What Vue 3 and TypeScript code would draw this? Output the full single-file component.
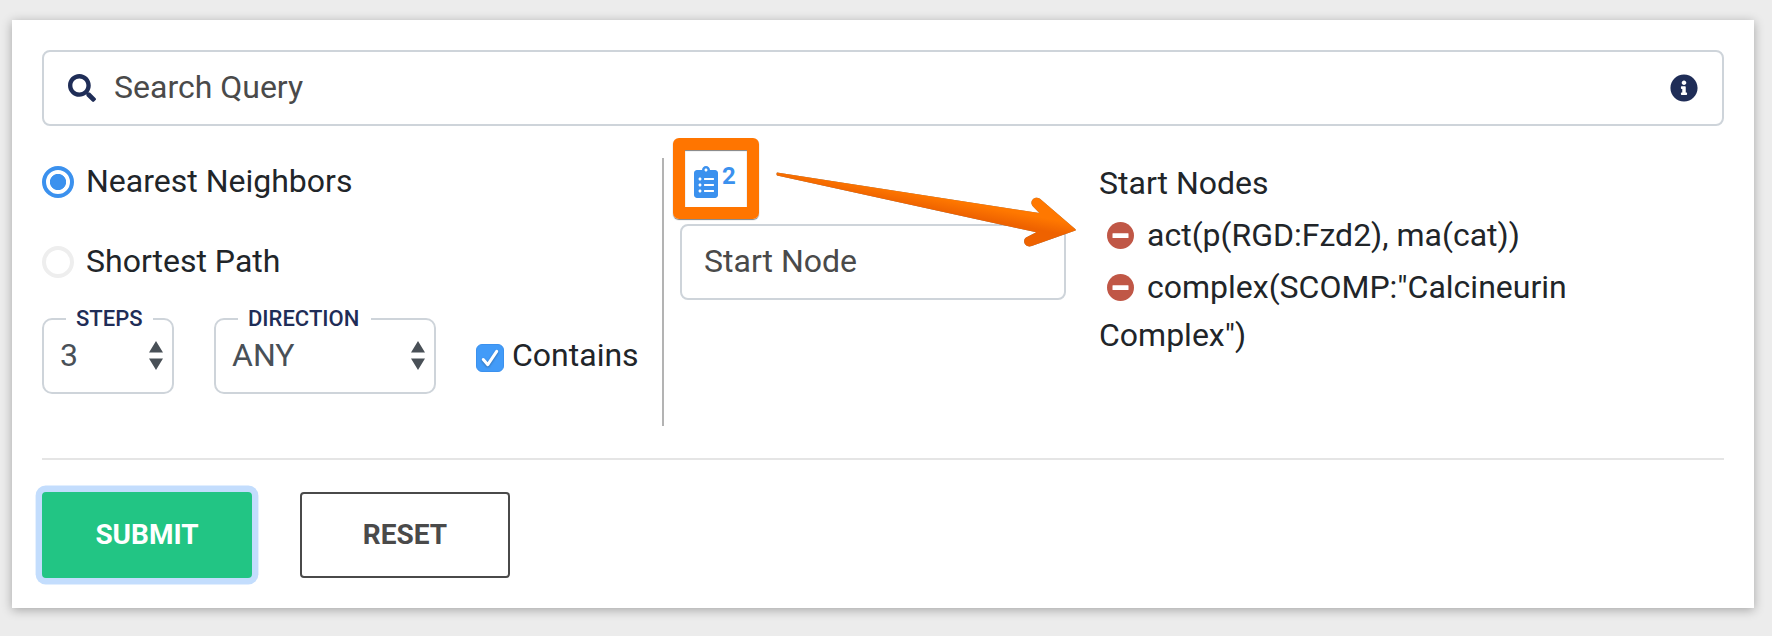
<script setup lang="ts">
import { ref } from 'vue'

type Mode = 'nearest' | 'shortest'

const modes: { id: Mode; label: string }[] = [
  { id: 'nearest', label: 'Nearest Neighbors' },
  { id: 'shortest', label: 'Shortest Path' },
]
const mode = ref<Mode>('nearest')

const selects = [
  { id: 'steps', label: 'Steps', value: '3' },
  { id: 'direction', label: 'Direction', value: 'ANY' },
]
const contains = ref(true)

const startNodes = ref<string[]>(['act(p(RGD:Fzd2), ma(cat))', 'complex(SCOMP:"Calcineurin Complex")'])

function removeNode(index: number) {
  startNodes.value.splice(index, 1)
}
</script>

<template>
  <div class="page">
    <main class="card">
      <div class="search">
        <svg class="search-icon" viewBox="0 0 512 512">
          <path d="M505 442.700L405.300 343c-4.500-4.500-10.600-7-17-7H372c27.600-35.300 44-79.700 44-128C416 93.100 322.900 0 208 0S0 93.100 0 208s93.100 208 208 208c48.300 0 92.700-16.400 128-44v16.300c0 6.400 2.500 12.500 7 17l99.700 99.700c9.400 9.400 24.600 9.400 33.900 0l28.300-28.300c9.400-9.400 9.400-24.600.1-34zM208 336c-70.700 0-128-57.200-128-128 0-70.700 57.200-128 128-128 70.700 0 128 57.200 128 128 0 70.700-57.200 128-128 128z" />
        </svg>
        <span class="placeholder">Search Query</span>
        <svg class="info-icon" viewBox="0 0 512 512">
          <path d="M256 8C119 8 8 119.100 8 256c0 137 111 248 248 248s248-111 248-248C504 119.100 393 8 256 8zm0 110c23.200 0 42 18.800 42 42s-18.800 42-42 42-42-18.800-42-42 18.800-42 42-42zm56 254c0 6.600-5.400 12-12 12h-88c-6.600 0-12-5.400-12-12v-24c0-6.600 5.400-12 12-12h12v-64h-12c-6.600 0-12-5.400-12-12v-24c0-6.600 5.400-12 12-12h64c6.600 0 12 5.400 12 12v100h12c6.600 0 12 5.400 12 12v24z" />
        </svg>
      </div>

      <div class="columns">
        <section class="options">
          <div
            v-for="m in modes"
            :key="m.id"
            class="radio"
            :class="{ checked: mode === m.id }"
            @click="mode = m.id"
          >
            <span class="dot"></span>
            <span>{{ m.label }}</span>
          </div>
          <div class="controls">
            <div v-for="s in selects" :key="s.id" class="select" :class="s.id">
              <span class="legend">{{ s.label }}</span>
              <span class="value">{{ s.value }}</span>
              <svg class="arrows" viewBox="0 0 14 29">
                <path d="M7 0L14 11.500H0zM7 29L0 17.500h14z" />
              </svg>
            </div>
            <div class="check" @click="contains = !contains">
              <span class="box">
                <svg v-if="contains" viewBox="0 0 28 28">
                  <path d="M7.300 15.500L11.800 20.700L20.700 7.300" />
                </svg>
              </span>
              <span>Contains</span>
            </div>
          </div>
        </section>

        <section class="start">
          <div class="highlight">
            <svg class="clipboard" viewBox="0 0 384 512">
              <path d="M336 64h-80c0-35.300-28.700-64-64-64s-64 28.700-64 64H48C21.500 64 0 85.500 0 112v352c0 26.500 21.500 48 48 48h288c26.500 0 48-21.500 48-48V112c0-26.500-21.500-48-48-48zM96 424c-13.300 0-24-10.700-24-24s10.700-24 24-24 24 10.700 24 24-10.700 24-24 24zm0-96c-13.300 0-24-10.700-24-24s10.700-24 24-24 24 10.700 24 24-10.700 24-24 24zm0-96c-13.300 0-24-10.700-24-24s10.700-24 24-24 24 10.700 24 24-10.700 24-24 24zm96-192c13.300 0 24 10.700 24 24s-10.700 24-24 24-24-10.700-24-24 10.700-24 24-24zm128 368c0 4.400-3.600 8-8 8H168c-4.400 0-8-3.600-8-8v-16c0-4.400 3.600-8 8-8h144c4.400 0 8 3.600 8 8v16zm0-96c0 4.400-3.600 8-8 8H168c-4.400 0-8-3.600-8-8v-16c0-4.400 3.600-8 8-8h144c4.400 0 8 3.600 8 8v16zm0-96c0 4.400-3.600 8-8 8H168c-4.400 0-8-3.600-8-8v-16c0-4.400 3.600-8 8-8h144c4.400 0 8 3.600 8 8v16z" />
            </svg>
            <span class="count">{{ startNodes.length }}</span>
          </div>
          <div class="node-input">Start Node</div>
          <svg class="pointer" viewBox="0 0 304 54">
            <defs>
              <linearGradient id="pointer-fill" gradientUnits="userSpaceOnUse" x1="262" y1="42" x2="258" y2="63">
                <stop offset="0.200" stop-color="#ff7800" />
                <stop offset="0.800" stop-color="#ee6200" />
              </linearGradient>
            </defs>
            <path fill="url(#pointer-fill)" d="M3 2.400L265.300 43L259 36.600C254.500 31.500 260.500 25.500 266 28.800L301.500 59.300Q302 60 301.500 60.500L257 76.300C250.500 77.700 247.500 69.500 253 67L262.300 62.300L3 5.600Q2 4 3 2.400z" />
          </svg>
        </section>

        <section class="nodes">
          <div>Start Nodes</div>
          <div v-for="(node, i) in startNodes" :key="node" class="node">
            <svg class="minus" viewBox="0 0 27 27" @click="removeNode(i)">
              <circle cx="13.500" cy="13.500" r="13.500" />
              <rect x="5.500" y="11.300" width="16" height="4.600" rx="0.500" />
            </svg>{{ node }}
          </div>
        </section>
      </div>

      <div class="actions">
        <button class="btn submit" type="button">Submit</button>
        <button class="btn reset" type="button">Reset</button>
      </div>
    </main>
  </div>
</template>

<style>
body {
  margin: 0;
  background: #ececec;
}
</style>

<style scoped>
* {
  box-sizing: border-box;
}

.page {
  height: 636px;
  padding: 20px 18px 28px 12px;
  overflow: hidden;
  background: #ececec;
  color: #212529;
  font: 400 32px/48px Roboto, sans-serif;
}

.card {
  height: 588px;
  padding: 30px;
  background: #fff;
  box-shadow: 0 2px 10px rgba(0, 0, 0, 0.3);
}

svg {
  display: block;
  flex: none;
  overflow: visible;
}

.search {
  display: flex;
  align-items: center;
  height: 76px;
  padding: 0 24px;
  border: 2px solid #ced4da;
  border-radius: 8px;
}

.search-icon,
.info-icon {
  width: 28px;
  height: 28px;
  fill: #1f2d57;
}

.placeholder {
  flex: 1;
  margin: 0 0 2px 18px;
  color: #4a4a4a;
}

.columns {
  display: flex;
  height: 268px;
  margin-top: 32px;
}

.options {
  width: 622px;
  border-right: 2px solid #b3b3b3;
}

.radio {
  display: flex;
  align-items: center;
  height: 48px;
  margin: -1px 0 32px;
}

.radio + .radio {
  margin-top: 0;
}

.dot {
  width: 32px;
  height: 32px;
  margin: 2px 12px 0 0;
  border: 4px solid #eee;
  border-radius: 50%;
}

.checked .dot {
  border-color: #3b91ee;
  background: radial-gradient(circle, #3b91ee 7.700px, #fff 8.500px);
}

.controls {
  display: flex;
  margin-top: 1px;
  padding-top: 1px;
}

.select {
  position: relative;
  display: flex;
  justify-content: space-between;
  height: 76px;
  padding: 11px 8px 0 16px;
  border: 2px solid #ced4da;
  border-radius: 10px;
  color: #495057;
}

.steps {
  width: 132px;
  margin-right: 40px;
}

.direction {
  width: 222px;
  margin-right: 40px;
}

.legend {
  position: absolute;
  top: -14px;
  left: 22px;
  padding: 0 10px;
  background: #fff;
  color: #1f2d57;
  font-size: 22px;
  font-weight: 500;
  line-height: 26px;
  text-transform: uppercase;
}

.direction .legend {
  padding-right: 12px;
}

.arrows {
  width: 14px;
  height: 29px;
  margin: 10px 1px 0 0;
  fill: #495057;
}

.check {
  display: flex;
  height: 48px;
  margin-top: 13px;
}

.box {
  width: 28px;
  height: 28px;
  margin: 13px 8px 0 0;
  border: 1px solid #3b91ee;
  border-radius: 6px;
  background: #429bf8;
}

.box svg {
  width: 28px;
  height: 28px;
  margin: -1px;
  fill: none;
  stroke: #fff;
  stroke-width: 3;
  stroke-linecap: round;
  stroke-linejoin: round;
  filter: drop-shadow(0 1px 1px rgba(0, 0, 0, 0.3));
}

.start {
  position: relative;
  width: 436px;
  padding: 0 34px 0 16px;
}

.highlight {
  display: flex;
  width: 86px;
  height: 81px;
  margin: -20px 0 5px -7px;
  padding: 17px 0 0 9px;
  border: 12px solid #ff7500;
  border-radius: 6px;
  box-shadow: 0 1px 1px rgba(0, 0, 0, 0.5), inset 0 1px 1px rgba(0, 0, 0, 0.5);
}

.clipboard {
  width: 24px;
  height: 32px;
  margin-top: -1px;
  fill: #3b91ee;
}

.count {
  margin-left: 4px;
  color: #3b91ee;
  font-size: 24px;
  font-weight: 700;
  line-height: 18px;
}

.node-input {
  height: 76px;
  padding: 11px 22px;
  border: 2px solid #ced4da;
  border-radius: 8px;
  color: #4a4a4a;
}

.pointer {
  position: absolute;
  top: 12px;
  left: 110px;
  width: 304px;
  height: 54px;
  filter: drop-shadow(0 0.500px 0.500px rgba(0, 0, 0, 0.5));
}

.nodes {
  width: 500px;
  margin-left: -1px;
  padding-top: 1px;
}

.node {
  padding-top: 4px;
}

.minus {
  display: inline-block;
  width: 27px;
  height: 27px;
  margin: 0 13px 0 8px;
  vertical-align: -3px;
}

.minus circle {
  fill: #c05746;
}

.minus rect {
  fill: #fff;
}

.actions {
  display: flex;
  gap: 48px;
  margin-top: 32px;
  padding-top: 32px;
  border-top: 2px solid #e5e5e5;
}

.btn {
  width: 210px;
  height: 86px;
  padding: 0;
  border: 2px solid #4a4a4a;
  border-radius: 4px;
  background: #fff;
  color: #4a4a4a;
  font: 700 28px/42px Roboto, sans-serif;
  text-transform: uppercase;
}

.submit {
  border-color: #22c584;
  background: #22c584;
  box-shadow: 0 0 0 6.400px #c3ddfd;
  color: #fff;
}
</style>
